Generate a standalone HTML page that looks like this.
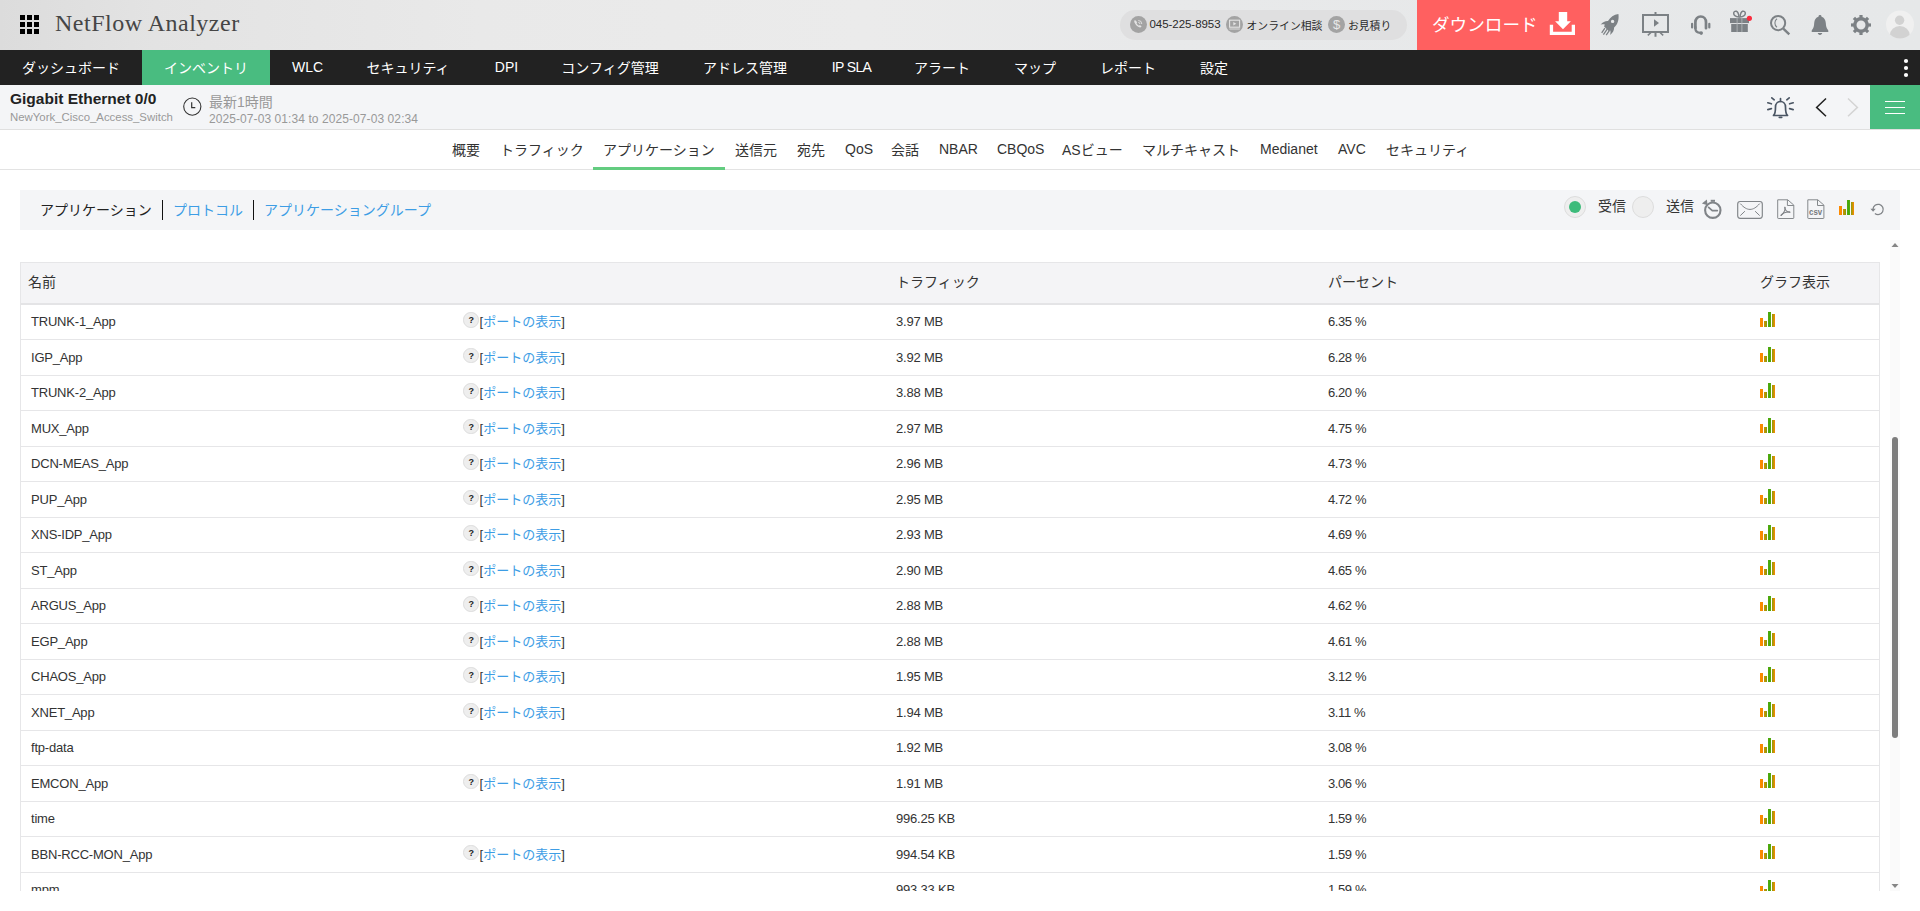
<!DOCTYPE html>
<html lang="ja">
<head>
<meta charset="utf-8">
<title>NetFlow Analyzer</title>
<style>
*{box-sizing:border-box;margin:0;padding:0}
html,body{width:1920px;height:911px;overflow:hidden;background:#fff}
body{font-family:"Liberation Sans","Noto Sans CJK JP",sans-serif;font-size:13px;color:#333;position:relative}
.abs{position:absolute}
a{text-decoration:none;color:#3d9de5}
/* top header */
#top{position:absolute;left:0;top:0;width:1920px;height:50px;background:linear-gradient(90deg,#dcdcdc 0,#e3e3e3 8%,#e9e9e9 25%,#ebebeb 45%,#e8e9ea 60%,#e6e8e9 100%)}
#grid{position:absolute;left:20px;top:15px;width:19px;height:19px}
#grid i{position:absolute;width:5px;height:5px;background:#000}
#title{position:absolute;left:55px;top:8px;font-family:"Liberation Serif",serif;font-size:24px;line-height:30px;color:#464646;white-space:nowrap;letter-spacing:0.5px}
#pill{position:absolute;left:1120px;top:10px;width:287px;height:30px;border-radius:15px;background:#dfdfe0}
#pill span{position:absolute;top:0;line-height:33px;font-size:10.800px;color:#2a2a2a;white-space:nowrap}
#pill .ic{position:absolute;top:6px;width:17px;height:17px;border-radius:50%;background:#a3a3a3}
#dl{position:absolute;left:1417px;top:0;width:173px;height:50px;background:#ff6060;color:#fff}
#dl span{position:absolute;left:15px;top:0;line-height:51px;font-size:17.6px;white-space:nowrap}
/* nav */
#nav{position:absolute;left:0;top:50px;width:1920px;height:35px;background:#222}
#nav div{position:absolute;top:0;height:35px;line-height:36px;color:#fff;font-size:14px;text-align:center;white-space:nowrap;padding-right:2px}
#nav div.on{background:#49bc80}
#nav div.lat{line-height:35px;padding-right:0}
/* sub header */
#sub{position:absolute;left:0;top:85px;width:1920px;height:45px;background:#f4f5f7;border-bottom:1px solid #e0e0e0}
#sub .h1{position:absolute;left:10px;top:4px;font-size:15.5px;font-weight:bold;line-height:20px;color:#222;white-space:nowrap}
#sub .h2{position:absolute;left:10px;top:25px;font-size:11.4px;line-height:14px;color:#999;white-space:nowrap}
#sub .t1{position:absolute;left:209px;top:7px;font-size:14px;line-height:20px;color:#999;white-space:nowrap}
#sub .t2{position:absolute;left:209px;top:27px;font-size:12px;line-height:14px;color:#999;white-space:nowrap;letter-spacing:.08px}
#ham{position:absolute;left:1870px;top:0;width:50px;height:44px;background:#49bc80}
#ham i{position:absolute;left:15px;width:20px;height:1.4px;background:#fff}
/* tabs */
#tabs{position:absolute;left:0;top:130px;width:1920px;height:40px;border-bottom:1px solid #e3e3e3;background:#fff}
#tabs div{position:absolute;top:0;height:40px;line-height:41px;font-size:14px;color:#333;white-space:nowrap}
#tabs div.lat{line-height:38px}
#tabs .ul{position:absolute;left:593px;top:37px;width:132px;height:3px;background:#63cc80}
/* toolbar */
#tb{position:absolute;left:20px;top:190px;width:1880px;height:40px;background:#f4f5f7}
#tb .l{position:absolute;top:0;line-height:41px;font-size:14px;white-space:nowrap}
#tb .sep{position:absolute;top:10px;width:1.4px;height:20px;background:#111}
.radio{position:absolute;top:6px;width:22px;height:22px;border-radius:50%;background:#eee;border:1px solid #ddd}
.radio.on:after{content:"";position:absolute;left:4px;top:4px;width:12px;height:12px;border-radius:50%;background:#3dbb7b}
/* table */
#tw{position:absolute;left:20px;top:240px;width:1880px;height:651px;overflow:hidden}
#th{position:absolute;left:0;top:22px;width:1860px;height:43px;background:#f4f4f6;border:1px solid #e6e6e8;border-bottom:2px solid #e4e4e6}
#th span{position:absolute;top:0;line-height:39px;font-size:14px;color:#333;white-space:nowrap}
.r{position:absolute;left:0;width:1860px;height:35.5px;border-bottom:1px solid #e6e6e8;border-left:1px solid #e6e6e8;border-right:1px solid #e6e6e8}
.r span{position:absolute;top:0;line-height:34px;font-size:13px;color:#333;white-space:nowrap}
.r.o span{line-height:36px}
.r .n{left:10px;letter-spacing:-.2px}
.r .p{left:458.500px}
.r .t{left:875px;letter-spacing:-.2px}
.r .c{left:1307px;letter-spacing:-.4px}
.r .q{position:absolute;left:442px;top:7.500px;width:15.500px;height:15.500px;border-radius:50%;background:#eee;border:1px solid #ddd;font-size:9px;line-height:14.500px;padding-left:1px;text-align:center;color:#222;font-style:normal;font-weight:bold}
.r svg{position:absolute;left:1739px;top:7px}
#sb{position:absolute;left:1870px;top:0;width:10px;height:651px;background:#fafafa}
#sb .thumb{position:absolute;left:2px;top:197px;width:6px;height:301px;border-radius:3px;background:#7d7d7d}
</style>
</head>
<body>
<div id="top">
  <div id="grid"><i style="left:0px;top:0px"></i><i style="left:7px;top:0px"></i><i style="left:14px;top:0px"></i><i style="left:0px;top:7px"></i><i style="left:7px;top:7px"></i><i style="left:14px;top:7px"></i><i style="left:0px;top:14px"></i><i style="left:7px;top:14px"></i><i style="left:14px;top:14px"></i></div>
  <div id="title">NetFlow Analyzer</div>
  <div id="pill">
<i class="ic" style="left:10px"></i>
<svg class="abs" style="left:10px;top:6px" width="17" height="17" viewBox="0 0 17 17"><path d="M4.600 4.300c-.5.500-.5 1.400 0 2.500c.8 1.800 2.300 3.400 4.100 4.300c1 .5 1.900.5 2.400 0l.5-.7l-1.700-1.300l-.9.600c-1-.500-1.900-1.400-2.500-2.500l.6-.900l-1.400-1.800z" fill="#e4e4e4"/><path d="M8.300 6.400a1.600 1.600 0 0 1 1.600 1.600M8.300 4.500a3.500 3.500 0 0 1 3.500 3.500" fill="none" stroke="#e4e4e4" stroke-width=".9"/></svg>
<span style="left:29.500px;font-size:11.500px;letter-spacing:-.05px;line-height:29px">045-225-8953</span>
<i class="ic" style="left:106px"></i>
<svg class="abs" style="left:106px;top:6px" width="17" height="17" viewBox="0 0 17 17"><rect x="3.600" y="4.200" width="10" height="7" fill="none" stroke="#e4e4e4" stroke-width="1.100"/><path d="M7.300 5.900v3.600l3-1.800z" fill="#e4e4e4"/><path d="M3.400 13h10.400" stroke="#e4e4e4" stroke-width=".9"/></svg>
<span style="left:126.500px;letter-spacing:.05px">オンライン相談</span>
<i class="ic" style="left:208px"></i>
<span style="left:208px;width:17px;text-align:center;color:#e8e8e8;font-size:13px;line-height:29px">$</span>
<span style="left:228px">お見積り</span>
</div>
  <div id="dl"><span>ダウンロード</span><svg class="abs" style="left:132px;top:11px" width="27" height="25" viewBox="0 0 27 25"><path d="M9.800 1h8.400v9.300h3.700L14 18.300L6.100 10.300h3.700z" fill="#fff"/><path d="M1.300 13.700h3.300v7h18.600v-7h3.300V24H1.300z" fill="#fff" transform="translate(-.5 0)"/></svg></div>
  <div id="icons">
<svg class="abs" style="left:1600px;top:12.300px" width="22" height="25" viewBox="0 0 22 25"><g fill="#7c8185"><path d="M20 1.800c-4.500.6-8.200 3.200-10.400 7c-2.600-.2-5.200.9-7.400 3.700c1.600-.5 3-.5 4.200-.1l-.7 1.900l4.600 4.600l1.600-.6c.4 1.300.3 2.700-.3 4.400c2.900-2 4.200-4.600 4.100-7.400c3.500-2.800 5.100-8 4.300-13.500zM14.200 10.900a1.700 1.700 0 1 1 0-3.400a1.700 1.700 0 0 1 0 3.400z" transform="translate(-1.600 .2)"/><path d="M4.900 16.200l-3.200 4.600M7.200 17.200l-3.800 5.400M9.500 18.400l-3.300 4.700" stroke="#7c8185" stroke-width="1.300" fill="none"/></g></svg>
<svg class="abs" style="left:1641px;top:11px" width="29" height="27" viewBox="0 0 29 27"><g fill="none" stroke="#7c8185"><rect x="2" y="4" width="25" height="17" stroke-width="2"/><path d="M14.500 1v3M14.500 21v4.800" stroke-width="2"/><path d="M10 21.500l-3.200 2.800M19 21.500l3.200 2.800" stroke-width="1.600"/></g><path d="M13 8.200v7.600l5-3.800z" fill="#7c8185"/></svg>
<svg class="abs" style="left:1690px;top:14px" width="22" height="22" viewBox="0 0 22 22"><g fill="none" stroke="#7c8185" stroke-linecap="round"><path d="M5.400 14.200V8.300c0-3.400 2.200-5.800 5.300-5.800s5.300 2.400 5.300 5.800v5.900" stroke-width="2.700"/><path d="M5.400 13v1.600c0 2.600 1.600 4.200 5 4.300" stroke-width="2.200"/><path d="M2.100 9.800v3.600M19.300 9.800v3.600" stroke-width="2.200"/></g><circle cx="11.200" cy="19.100" r="1.800" fill="#7c8185"/></svg>
<svg class="abs" style="left:1729px;top:9px" width="24" height="24" viewBox="0 0 24 24"><g fill="#7c8185"><rect x="1" y="9.100" width="19" height="5"/><rect x="2.200" y="15" width="16.600" height="8"/></g><path d="M8.100 9.100v14M12.900 9.100v14" stroke="#b9bcbe" stroke-width=".8"/><g fill="none" stroke="#7c8185" stroke-width="1.500"><path d="M10 8c-3-.3-5.300-1.800-5.300-3.800c0-1.500 1.300-2.400 2.700-1.900c1.500.6 2.300 3 2.600 5.700z"/><path d="M11 8c3-.3 5.300-1.800 5.300-3.800c0-1.500-1.300-2.400-2.700-1.900c-1.500.6-2.300 3-2.600 5.700z"/></g><circle cx="20.400" cy="9.300" r="2.600" fill="#fb2b3e"/></svg>
<svg class="abs" style="left:1769px;top:14px" width="23" height="22" viewBox="0 0 23 22"><g fill="none" stroke="#7c8185"><circle cx="9.100" cy="9.100" r="7.100" stroke-width="2"/><path d="M14.300 14.600l6 5.800" stroke-width="2.400"/><path d="M8 4.800c-2.800 1.800-2.800 6.600 0 8.400" stroke-width="1.100"/></g></svg>
<svg class="abs" style="left:1811px;top:14px" width="18" height="22" viewBox="0 0 18 22"><path d="M9 .9c.9 0 1.500.6 1.500 1.400v.5c2.600.7 4.100 3 4.300 6.300c.2 3.200.6 5.300 2.200 6.800c.3.300.3.700.3 1.100v1H.7v-1c0-.4 0-.8.300-1.100c1.600-1.500 2-3.600 2.200-6.800c.2-3.300 1.700-5.600 4.300-6.300v-.5C7.500 1.500 8.100.9 9 .9zM6.800 19h4.400c0 1.100-1 1.900-2.200 1.900s-2.200-.8-2.200-1.900z" fill="#7c8185"/></svg>
<svg class="abs" style="left:1850px;top:14px" width="22" height="22" viewBox="0 0 22 22"><g transform="translate(11 11)"><circle r="6.200" fill="none" stroke="#7c8185" stroke-width="3.400"/><g fill="#7c8185"><rect x="-1.600" y="-10" width="3.200" height="3.200"/><rect x="-1.600" y="6.800" width="3.200" height="3.200"/><rect x="-10" y="-1.600" width="3.200" height="3.200"/><rect x="6.800" y="-1.600" width="3.200" height="3.200"/><g transform="rotate(45)"><rect x="-1.600" y="-10" width="3.200" height="3.200"/><rect x="-1.600" y="6.800" width="3.200" height="3.200"/><rect x="-10" y="-1.600" width="3.200" height="3.200"/><rect x="6.800" y="-1.600" width="3.200" height="3.200"/></g></g></g></svg>
<svg class="abs" style="left:1886px;top:10px" width="28" height="29" viewBox="0 0 28 29"><defs><clipPath id="av"><circle cx="14" cy="14.500" r="14"/></clipPath></defs><circle cx="14" cy="14.500" r="14" fill="#f0f0f0"/><g clip-path="url(#av)" fill="#d2d2d2"><circle cx="13.600" cy="10.300" r="4.700"/><ellipse cx="13.800" cy="25.500" rx="10" ry="9.500"/></g></svg>
</div>
</div>
<div id="nav">
<div style="left:0px;width:142px;padding-right:0">ダッシュボード</div>
<div class="on" style="left:142px;width:128px;padding-right:0">インベントリ</div>
<div class="lat" style="left:270px;width:75px">WLC</div>
<div style="left:345px;width:128px">セキュリティ</div>
<div class="lat" style="left:473px;width:67px">DPI</div>
<div style="left:540px;width:142px">コンフィグ管理</div>
<div style="left:682px;width:128px">アドレス管理</div>
<div class="lat" style="left:810px;width:83px;letter-spacing:-.6px">IP SLA</div>
<div style="left:893px;width:100px">アラート</div>
<div style="left:993px;width:86px">マップ</div>
<div style="left:1079px;width:100px">レポート</div>
<div style="left:1179px;width:72px">設定</div>
<svg class="abs" style="left:1900px;top:5px" width="12" height="26" viewBox="0 0 12 26"><circle cx="6" cy="6" r="2.1" fill="#fff"/><circle cx="6" cy="13" r="2.1" fill="#fff"/><circle cx="6" cy="20" r="2.1" fill="#fff"/></svg>
</div>
<div id="sub">
<div class="h1">Gigabit Ethernet 0/0</div>
<div class="h2">NewYork_Cisco_Access_Switch</div>
<svg class="abs" style="left:182px;top:11px" width="21" height="21" viewBox="0 0 21 21"><circle cx="10.3" cy="10.6" r="8.6" fill="none" stroke="#333" stroke-width="1.1"/><path d="M9.7 6.2v5.4h3.6" fill="none" stroke="#333" stroke-width="1.2"/></svg>
<div class="t1">最新1時間</div>
<div class="t2">2025-07-03 01:34 to 2025-07-03 02:34</div>
<svg class="abs" style="left:1765px;top:10px" width="31" height="25" viewBox="0 0 31 25"><g fill="none" stroke="#4a5563" stroke-width="1.700" stroke-linecap="round"><path d="M8.5 20.5c2-1.5 2-4 2-8.5c0-3.2 2.2-5.5 5-5.5s5 2.3 5 5.5c0 4.500 0 7 2 8.500z" stroke-linejoin="round"/><path d="M15.500 3.700v2.600"/><path d="M14.300 22.300h2.400"/><path d="M6.800 2.800l2.400 2"/><path d="M24.200 2.800l-2.400 2"/><path d="M2.800 7.800l3.600 1"/><path d="M28.200 7.800l-3.600 1"/><path d="M2.800 14.600l3.600-1"/><path d="M28.200 14.600l-3.600-1"/></g></svg>
<svg class="abs" style="left:1814px;top:12px" width="14" height="21" viewBox="0 0 14 21"><path d="M12 1.500L2.600 10.400L12 19.300" fill="none" stroke="#222" stroke-width="1.500"/></svg>
<svg class="abs" style="left:1846px;top:12px" width="14" height="21" viewBox="0 0 14 21"><path d="M2 1.500L11.400 10.400L2 19.300" fill="none" stroke="#d4d4d4" stroke-width="1.500"/></svg>
<div id="ham"><i style="top:16px"></i><i style="top:22px"></i><i style="top:28px"></i></div>
</div>
<div id="tabs">
<div style="left:452px">概要</div>
<div style="left:500px">トラフィック</div>
<div style="left:603px">アプリケーション</div>
<div style="left:735px">送信元</div>
<div style="left:797px">宛先</div>
<div class="lat" style="left:845px">QoS</div>
<div style="left:891px">会話</div>
<div class="lat" style="left:939px">NBAR</div>
<div class="lat" style="left:997px">CBQoS</div>
<div style="left:1062px">ASビュー</div>
<div style="left:1142px">マルチキャスト</div>
<div class="lat" style="left:1260px">Medianet</div>
<div class="lat" style="left:1338px">AVC</div>
<div style="left:1386px">セキュリティ</div>
<span class="ul"></span>
</div>
<div id="tb">
<span class="l" style="left:20px;color:#222">アプリケーション</span><i class="sep" style="left:142px"></i>
<a class="l" style="left:153px">プロトコル</a><i class="sep" style="left:233px"></i>
<a class="l" style="left:244px">アプリケーショングループ</a>
<i class="radio on" style="left:1544px"></i><span class="l" style="left:1578px;color:#333;line-height:33px">受信</span>
<i class="radio" style="left:1612px"></i><span class="l" style="left:1646px;color:#333;line-height:33px">送信</span>
<div id="tbicons">
<svg class="abs" style="left:1680px;top:8px" width="24" height="22" viewBox="0 0 24 22"><g fill="none" stroke="#808488"><circle cx="12.800" cy="12.200" r="7.700" stroke-width="2.100"/><path d="M8.600 9.300l3.700 3.300h5" stroke-width="1.700" stroke-linecap="round" stroke-linejoin="round"/></g><path d="M1.900 5.600l5-4l.6 5.700z" fill="#808488"/><rect x="10.700" y="1.800" width="4.300" height="2" fill="#808488"/></svg>
<svg class="abs" style="left:1716px;top:10px" width="28" height="20" viewBox="0 0 28 20"><g fill="none" stroke="#808488"><rect x="1.700" y="1.500" width="24.600" height="16.800" rx="2.500" stroke-width="1.150"/><path d="M4.300 3.600c3.500 4 6.500 5.800 9.700 5.800s6.200-1.800 9.700-5.800" stroke-width="1"/><path d="M4.300 15.600l4.600-4.400M23.700 15.600l-4.600-4.400" stroke-width="1"/></g></svg>
<svg class="abs" style="left:1756px;top:8px" width="19" height="22" viewBox="0 0 19 22"><g fill="none" stroke="#85898c" stroke-width="1" stroke-linejoin="round"><path d="M1.700 1.800h10l6.100 5.300v12.800a.6.600 0 0 1-.6.600H2.300a.6.600 0 0 1-.6-.6z"/><path d="M11.400 1.800v5.700h6.400"/></g><g fill="none" stroke="#808488" stroke-width="1.100" stroke-linecap="round"><path d="M8.900 9.200c.6 2.600-.9 5.800-3.800 8.100"/><path d="M8.900 9.200c-.2 2.500 1.700 4.700 4.900 4.900"/><path d="M5.100 17.300c1.800-2.300 5.300-3.400 8.700-3.200"/></g></svg>
<svg class="abs" style="left:1786px;top:8px" width="19" height="22" viewBox="0 0 19 22"><g fill="none" stroke="#85898c" stroke-width="1" stroke-linejoin="round"><path d="M1.800 1.800h10l6.100 5.300v12.800a.6.600 0 0 1-.6.600H2.400a.6.600 0 0 1-.6-.6z"/><path d="M11.500 1.800v5.700h6.400"/></g><text x="3" y="16.900" font-family="Liberation Sans, sans-serif" font-size="9.400" font-weight="bold" fill="#777b7e" textLength="13.200" lengthAdjust="spacingAndGlyphs">csv</text></svg>
<svg class="abs" style="left:1819px;top:10px" width="16" height="15" viewBox="0 0 16 15"><defs><linearGradient id="bg" x1="0" x2="15" y1="0" y2="0" gradientUnits="userSpaceOnUse"><stop offset="0" stop-color="#ff8a00"/><stop offset=".2" stop-color="#f58a00"/><stop offset=".62" stop-color="#3cab0e"/><stop offset=".72" stop-color="#5aa80e"/><stop offset="1" stop-color="#ff8800"/></linearGradient></defs><g fill="url(#bg)"><rect x="0" y="6" width="3" height="9"/><rect x="4" y="9" width="3" height="6"/><rect x="8" y="0" width="3" height="15"/><rect x="12" y="2" width="3" height="13"/></g></svg>
<svg class="abs" style="left:1849px;top:12px" width="18" height="14" viewBox="0 0 18 14"><path d="M4 7.200a5.100 5.100 0 1 1 1.900 4.200" fill="none" stroke="#808488" stroke-width="1.300"/><path d="M1.400 6.700h5.300l-2.600 3.100z" fill="#808488"/></svg>
</div>
</div>
<div id="tw">
<div id="th"><span style="left:7px">名前</span><span style="left:875px">トラフィック</span><span style="left:1307px">パーセント</span><span style="left:1739px">グラフ表示</span></div>
<div class="r" style="top:64.5px"><span class="n">TRUNK-1_App</span><i class="q">?</i><span class="p">[<a>ポートの表示</a>]</span><span class="t">3.97 MB</span><span class="c">6.35 %</span><svg width="16" height="15" viewBox="0 0 16 15"><g fill="url(#bg)"><rect x="0" y="6" width="3" height="9"/><rect x="4" y="9" width="3" height="6"/><rect x="8" y="0" width="3" height="15"/><rect x="12" y="2" width="3" height="13"/></g></svg></div>
<div class="r o" style="top:100px"><span class="n">IGP_App</span><i class="q">?</i><span class="p">[<a>ポートの表示</a>]</span><span class="t">3.92 MB</span><span class="c">6.28 %</span><svg width="16" height="15" viewBox="0 0 16 15"><g fill="url(#bg)"><rect x="0" y="6" width="3" height="9"/><rect x="4" y="9" width="3" height="6"/><rect x="8" y="0" width="3" height="15"/><rect x="12" y="2" width="3" height="13"/></g></svg></div>
<div class="r" style="top:135.5px"><span class="n">TRUNK-2_App</span><i class="q">?</i><span class="p">[<a>ポートの表示</a>]</span><span class="t">3.88 MB</span><span class="c">6.20 %</span><svg width="16" height="15" viewBox="0 0 16 15"><g fill="url(#bg)"><rect x="0" y="6" width="3" height="9"/><rect x="4" y="9" width="3" height="6"/><rect x="8" y="0" width="3" height="15"/><rect x="12" y="2" width="3" height="13"/></g></svg></div>
<div class="r o" style="top:171px"><span class="n">MUX_App</span><i class="q">?</i><span class="p">[<a>ポートの表示</a>]</span><span class="t">2.97 MB</span><span class="c">4.75 %</span><svg width="16" height="15" viewBox="0 0 16 15"><g fill="url(#bg)"><rect x="0" y="6" width="3" height="9"/><rect x="4" y="9" width="3" height="6"/><rect x="8" y="0" width="3" height="15"/><rect x="12" y="2" width="3" height="13"/></g></svg></div>
<div class="r" style="top:206.5px"><span class="n">DCN-MEAS_App</span><i class="q">?</i><span class="p">[<a>ポートの表示</a>]</span><span class="t">2.96 MB</span><span class="c">4.73 %</span><svg width="16" height="15" viewBox="0 0 16 15"><g fill="url(#bg)"><rect x="0" y="6" width="3" height="9"/><rect x="4" y="9" width="3" height="6"/><rect x="8" y="0" width="3" height="15"/><rect x="12" y="2" width="3" height="13"/></g></svg></div>
<div class="r o" style="top:242px"><span class="n">PUP_App</span><i class="q">?</i><span class="p">[<a>ポートの表示</a>]</span><span class="t">2.95 MB</span><span class="c">4.72 %</span><svg width="16" height="15" viewBox="0 0 16 15"><g fill="url(#bg)"><rect x="0" y="6" width="3" height="9"/><rect x="4" y="9" width="3" height="6"/><rect x="8" y="0" width="3" height="15"/><rect x="12" y="2" width="3" height="13"/></g></svg></div>
<div class="r" style="top:277.5px"><span class="n">XNS-IDP_App</span><i class="q">?</i><span class="p">[<a>ポートの表示</a>]</span><span class="t">2.93 MB</span><span class="c">4.69 %</span><svg width="16" height="15" viewBox="0 0 16 15"><g fill="url(#bg)"><rect x="0" y="6" width="3" height="9"/><rect x="4" y="9" width="3" height="6"/><rect x="8" y="0" width="3" height="15"/><rect x="12" y="2" width="3" height="13"/></g></svg></div>
<div class="r o" style="top:313px"><span class="n">ST_App</span><i class="q">?</i><span class="p">[<a>ポートの表示</a>]</span><span class="t">2.90 MB</span><span class="c">4.65 %</span><svg width="16" height="15" viewBox="0 0 16 15"><g fill="url(#bg)"><rect x="0" y="6" width="3" height="9"/><rect x="4" y="9" width="3" height="6"/><rect x="8" y="0" width="3" height="15"/><rect x="12" y="2" width="3" height="13"/></g></svg></div>
<div class="r" style="top:348.5px"><span class="n">ARGUS_App</span><i class="q">?</i><span class="p">[<a>ポートの表示</a>]</span><span class="t">2.88 MB</span><span class="c">4.62 %</span><svg width="16" height="15" viewBox="0 0 16 15"><g fill="url(#bg)"><rect x="0" y="6" width="3" height="9"/><rect x="4" y="9" width="3" height="6"/><rect x="8" y="0" width="3" height="15"/><rect x="12" y="2" width="3" height="13"/></g></svg></div>
<div class="r o" style="top:384px"><span class="n">EGP_App</span><i class="q">?</i><span class="p">[<a>ポートの表示</a>]</span><span class="t">2.88 MB</span><span class="c">4.61 %</span><svg width="16" height="15" viewBox="0 0 16 15"><g fill="url(#bg)"><rect x="0" y="6" width="3" height="9"/><rect x="4" y="9" width="3" height="6"/><rect x="8" y="0" width="3" height="15"/><rect x="12" y="2" width="3" height="13"/></g></svg></div>
<div class="r" style="top:419.5px"><span class="n">CHAOS_App</span><i class="q">?</i><span class="p">[<a>ポートの表示</a>]</span><span class="t">1.95 MB</span><span class="c">3.12 %</span><svg width="16" height="15" viewBox="0 0 16 15"><g fill="url(#bg)"><rect x="0" y="6" width="3" height="9"/><rect x="4" y="9" width="3" height="6"/><rect x="8" y="0" width="3" height="15"/><rect x="12" y="2" width="3" height="13"/></g></svg></div>
<div class="r o" style="top:455px"><span class="n">XNET_App</span><i class="q">?</i><span class="p">[<a>ポートの表示</a>]</span><span class="t">1.94 MB</span><span class="c">3.11 %</span><svg width="16" height="15" viewBox="0 0 16 15"><g fill="url(#bg)"><rect x="0" y="6" width="3" height="9"/><rect x="4" y="9" width="3" height="6"/><rect x="8" y="0" width="3" height="15"/><rect x="12" y="2" width="3" height="13"/></g></svg></div>
<div class="r" style="top:490.5px"><span class="n">ftp-data</span><span class="t">1.92 MB</span><span class="c">3.08 %</span><svg width="16" height="15" viewBox="0 0 16 15"><g fill="url(#bg)"><rect x="0" y="6" width="3" height="9"/><rect x="4" y="9" width="3" height="6"/><rect x="8" y="0" width="3" height="15"/><rect x="12" y="2" width="3" height="13"/></g></svg></div>
<div class="r o" style="top:526px"><span class="n">EMCON_App</span><i class="q">?</i><span class="p">[<a>ポートの表示</a>]</span><span class="t">1.91 MB</span><span class="c">3.06 %</span><svg width="16" height="15" viewBox="0 0 16 15"><g fill="url(#bg)"><rect x="0" y="6" width="3" height="9"/><rect x="4" y="9" width="3" height="6"/><rect x="8" y="0" width="3" height="15"/><rect x="12" y="2" width="3" height="13"/></g></svg></div>
<div class="r" style="top:561.5px"><span class="n">time</span><span class="t">996.25 KB</span><span class="c">1.59 %</span><svg width="16" height="15" viewBox="0 0 16 15"><g fill="url(#bg)"><rect x="0" y="6" width="3" height="9"/><rect x="4" y="9" width="3" height="6"/><rect x="8" y="0" width="3" height="15"/><rect x="12" y="2" width="3" height="13"/></g></svg></div>
<div class="r o" style="top:597px"><span class="n">BBN-RCC-MON_App</span><i class="q">?</i><span class="p">[<a>ポートの表示</a>]</span><span class="t">994.54 KB</span><span class="c">1.59 %</span><svg width="16" height="15" viewBox="0 0 16 15"><g fill="url(#bg)"><rect x="0" y="6" width="3" height="9"/><rect x="4" y="9" width="3" height="6"/><rect x="8" y="0" width="3" height="15"/><rect x="12" y="2" width="3" height="13"/></g></svg></div>
<div class="r" style="top:632.5px"><span class="n">mpm</span><span class="t">993.33 KB</span><span class="c">1.59 %</span><svg width="16" height="15" viewBox="0 0 16 15"><g fill="url(#bg)"><rect x="0" y="6" width="3" height="9"/><rect x="4" y="9" width="3" height="6"/><rect x="8" y="0" width="3" height="15"/><rect x="12" y="2" width="3" height="13"/></g></svg></div>
<div id="sb"><svg class="abs" style="left:1px;top:2px" width="8" height="6" viewBox="0 0 8 6"><path d="M0.500 5L4 1L7.500 5z" fill="#858585"/></svg><i class="thumb abs"></i><svg class="abs" style="left:1px;top:643px" width="8" height="6" viewBox="0 0 8 6"><path d="M0.500 1L4 5L7.500 1z" fill="#858585"/></svg></div>
</div>
</body>
</html>
